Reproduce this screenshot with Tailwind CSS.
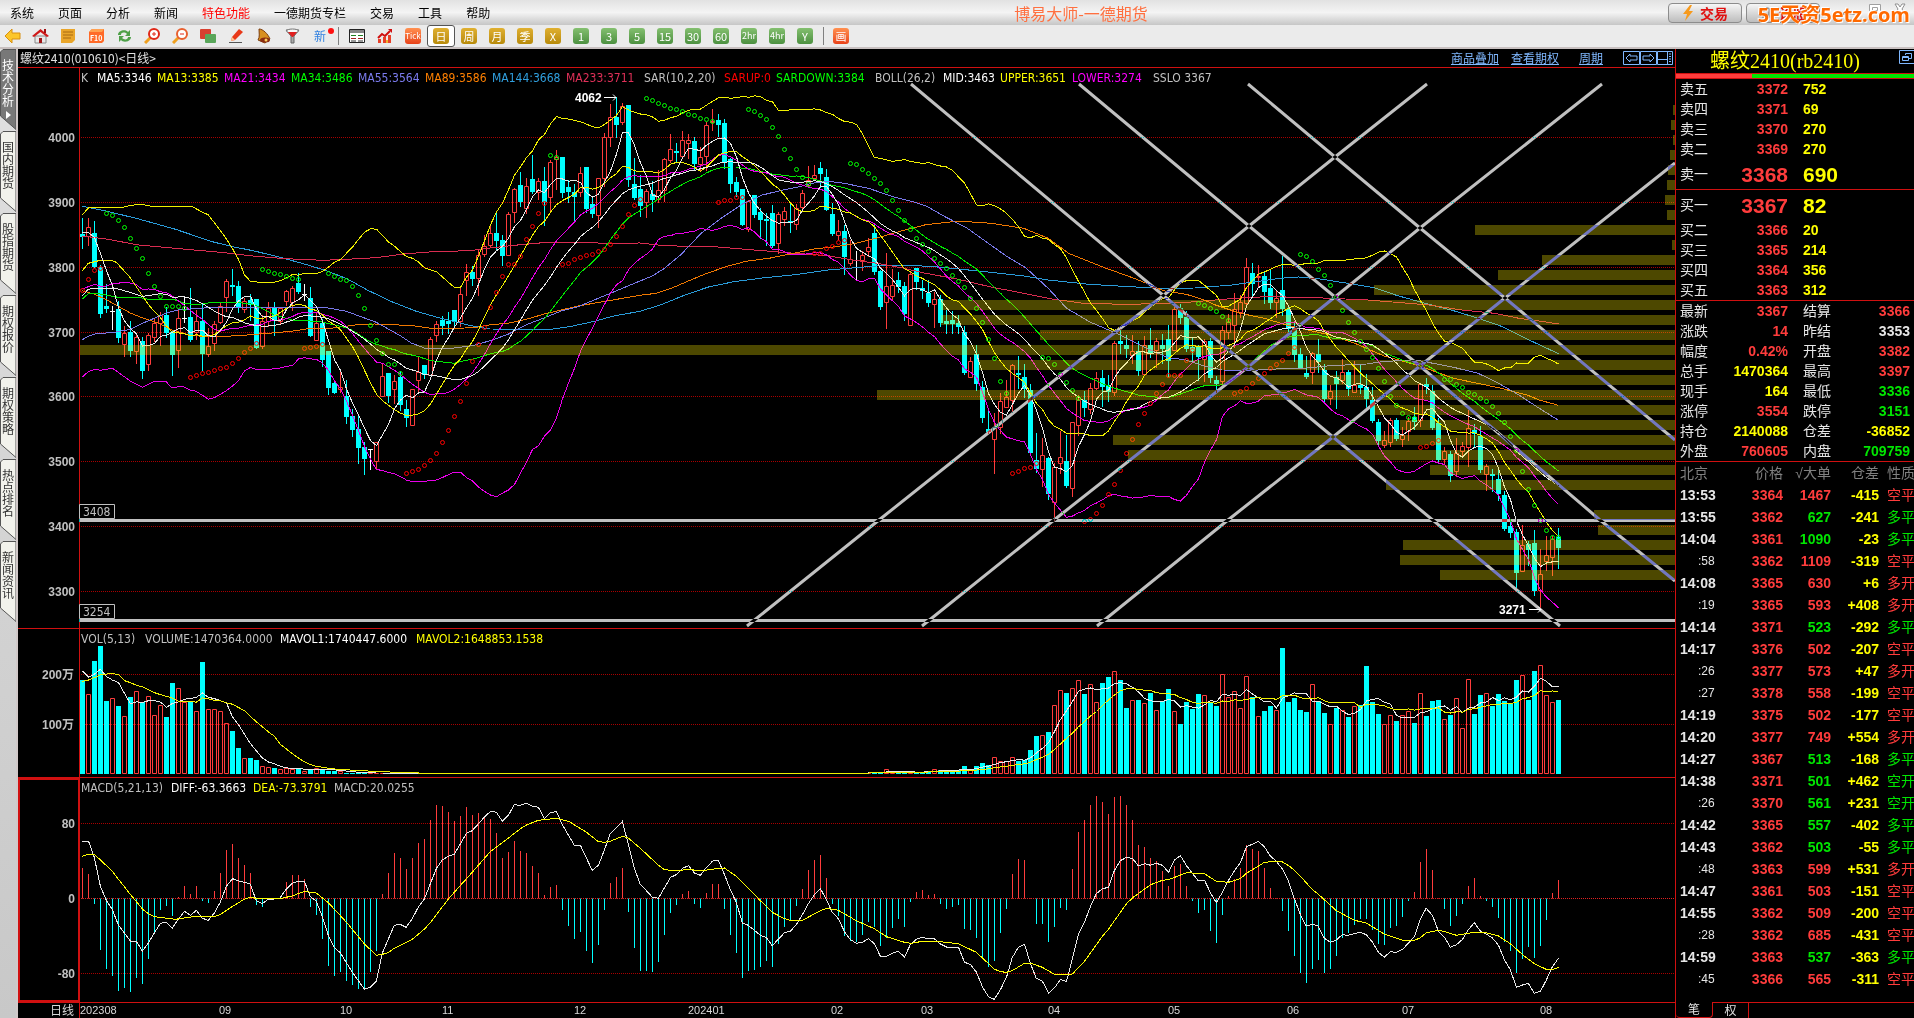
<!DOCTYPE html>
<html lang="zh-CN">
<head>
<meta charset="utf-8">
<title>博易大师-一德期货</title>
<script src="https://cdn.jsdelivr.net/npm/@tailwindcss/browser@4"></script>
</head>
<body class="h-screen overflow-hidden bg-black flex flex-col text-xs font-['Noto_Sans_CJK_SC',sans-serif] text-[#c0c0c0]">

<header class="relative h-[25px] shrink-0 flex items-center bg-linear-to-b from-[#e2e2e2] via-[#f4f4f4] to-[#c6c6c6] text-black">
  <nav class="flex gap-6 pl-[10px] leading-none">
    <a href="#">系统</a><a href="#">页面</a><a href="#">分析</a><a href="#">新闻</a><a href="#" class="text-[#ff0000]">特色功能</a><a href="#">一德期货专栏</a><a href="#">交易</a><a href="#">工具</a><a href="#">帮助</a>
  </nav>
  <h1 class="flex-1 pl-1 text-center text-base leading-none text-[#ff7040]">博易大师-一德期货</h1>
  <div class="flex items-center gap-1">
    <button class="w-[74px] h-5 rounded border border-[#8c8c8c] bg-linear-to-b from-[#f6f6f6] to-[#bdbdbd] flex items-center justify-center gap-[6px] text-sm font-bold leading-none text-[#e01010]">
      <svg width="12" height="16" viewBox="0 0 12 16"><path d="M8 0L1 9h4l-2 7 8-10H7l3-6z" fill="#f79a1c"/></svg>交易</button>
    <button class="w-[74px] h-5 rounded border border-[#8c8c8c] bg-linear-to-b from-[#f6f6f6] to-[#bdbdbd] flex items-center justify-center gap-[6px] text-sm font-bold leading-none text-[#e01010]">
      <svg width="14" height="14" viewBox="0 0 14 14"><circle cx="7" cy="7" r="6" fill="#9a9a9a"/><circle cx="7" cy="7" r="2" fill="#ddd"/></svg>诊股</button>
    <div class="flex w-[90px] h-5 justify-between pl-[18px] pr-2 items-start">
      <svg width="14" height="14" viewBox="0 0 14 14"><rect x="1.500" y="8.500" width="11" height="3" fill="#fff" stroke="#a0a0a0"/></svg>
      <svg width="14" height="12" viewBox="0 0 14 12"><path d="M1.500 1.500h11v9h-11zM4.500 4.500h5v3h-5z" fill="#fff" stroke="#a0a0a0"/></svg>
      <svg width="12" height="12" viewBox="0 0 12 12"><path d="M1 1h3l2 3 2-3h3L8 6l3 5H8L6 8l-2 3H1l3-5z" fill="#fff" stroke="#909090"/></svg>
    </div>
  </div>
  <div class="absolute right-1 top-[3px] text-xl leading-6 font-bold whitespace-nowrap text-[#ff6a00] font-['Open_Sans','Noto_Sans_CJK_SC',sans-serif] [text-shadow:1px_1px_0_#fff,-1px_-1px_0_#fff]">5E天资5etz.com</div>
</header>

<div id="tools" class="h-6 shrink-0 flex bg-[#ebebeb] border-b-2 border-[#c8c0c0] overflow-hidden pr-2 *:shrink-0 -ml-[2px]" role="toolbar">
  <button class="w-7 grid place-items-center" aria-label="后退"><svg width="17" height="16" viewBox="0 0 17 16"><path d="M8 1v4h8v6H8v4L1 8z" fill="#fcc62a" stroke="#d89010"/></svg></button>
  <button class="w-7 grid place-items-center" aria-label="首页"><svg width="17" height="16" viewBox="0 0 17 16"><path d="M3 8h11v7H3z" fill="#e8e8e8" stroke="#888"/><path d="M8.500 1L0 8l2 1 6.500-5L15 9l2-1z" fill="#d01818"/><path d="M12 1h2v4h-2z" fill="#a01010"/><path d="M7 10h3v5H7z" fill="#a01818"/></svg></button>
  <button class="w-7 grid place-items-center" aria-label="公告"><svg width="16" height="16" viewBox="0 0 16 16"><path d="M1 1h14v11l-3 3H1z" fill="#e9a52a"/><path d="M3 4h10M3 7h10M3 10h8" stroke="#a86a10"/></svg></button>
  <button class="w-7 grid place-items-center" aria-label="F10"><svg width="17" height="16" viewBox="0 0 17 16"><path d="M1 4l3-3h12v12l-2 2H1z" fill="#ff6a28"/><path d="M1 4l3-3h12l-2 3z" fill="#ffa050"/><text x="2" y="13" font-size="7" font-weight="bold" fill="#fff">F10</text></svg></button>
  <button class="w-7 grid place-items-center" aria-label="刷新"><svg width="15" height="16" viewBox="0 0 15 16"><path d="M1 7c0-5 8-6 10-3l2-2v6H8l2-2C8 4 4 4 4 7zM14 9c0 5-8 6-10 3l-2 2V8h5l-2 2c2 2 6 2 6-1z" fill="#4fa048"/></svg></button>
  <button class="w-7 grid place-items-center" aria-label="放大"><svg width="16" height="16" viewBox="0 0 16 16"><path d="M1 15l6-6" stroke="#f0a020" stroke-width="3"/><circle cx="10" cy="6" r="5" fill="#fff" stroke="#e02818" stroke-width="2"/><path d="M8 6h4M10 4v4" stroke="#e02818"/></svg></button>
  <button class="w-7 grid place-items-center" aria-label="缩小"><svg width="16" height="16" viewBox="0 0 16 16"><path d="M1 15l6-6" stroke="#f0a020" stroke-width="3"/><circle cx="10" cy="6" r="5" fill="#fff" stroke="#e86030" stroke-width="2"/><path d="M8 6h4" stroke="#e02818"/></svg></button>
  <button class="w-7 grid place-items-center" aria-label="叠加"><svg width="16" height="16" viewBox="0 0 16 16"><rect y="1" width="11" height="10" rx="1" fill="#d84030"/><rect x="5" y="6" width="11" height="9" rx="1" fill="#5aa65a"/></svg></button>
  <button class="w-7 grid place-items-center" aria-label="画线"><svg width="16" height="16" viewBox="0 0 16 16"><path d="M1 14.500h13" stroke="#555"/><path d="M11 1l4 3-8 8-4 1 1-4z" fill="#e83818"/><path d="M4 9l3 3-4 1z" fill="#ffc890"/></svg></button>
  <button class="w-7 grid place-items-center" aria-label="预警"><svg width="16" height="16" viewBox="0 0 16 16"><path d="M3 1c4 0 9 5 11 10l-5 4-7-3C4 9 3 5 3 1z" fill="#d89020" stroke="#7a3c10"/><ellipse cx="9" cy="12" rx="5" ry="2.500" fill="#8a2c10"/><circle cx="10" cy="12" r="1.500" fill="#ffd060"/></svg></button>
  <button class="w-7 grid place-items-center" aria-label="筛选"><svg width="15" height="16" viewBox="0 0 15 16"><path d="M1 2l5 6v7h3V8l5-6z" fill="#aaa" stroke="#666"/><ellipse cx="7.500" cy="3" rx="6" ry="2" fill="#f8f8f8" stroke="#777"/><path d="M3 4h9L8 9H7z" fill="#e02020"/></svg></button>
  <button class="relative w-7 grid place-items-center text-[#3080e0] leading-none">新<span class="absolute right-0 top-[3px] size-[6px] rounded-full bg-[#ff1010]"></span></button>
  <span class="w-[9px] flex justify-center py-[2px]"><i class="w-px bg-[#808080]"></i></span>
  <button class="w-7 grid place-items-center" aria-label="报价"><svg width="16" height="16" viewBox="0 0 16 16"><path d="M.5 1.500h15v13H.5z" fill="#fff" stroke="#222"/><path d="M1 2h14v3H1z" fill="#888"/><path d="M2 7.500h5M9 7.500h5" stroke="#208020"/><path d="M2 10.500h5M9 10.500h5" stroke="#a02020"/><path d="M2 13h5M9 13h5" stroke="#333"/></svg></button>
  <button class="w-7 grid place-items-center" aria-label="走势"><svg width="16" height="16" viewBox="0 0 16 16"><path d="M1 15v-4h3v4zM6 15V9h3v6zM11 15V7h3v8z" fill="#e84028"/><path d="M1 10l4-4 3 2 5-5" stroke="#d01010" stroke-width="2" fill="none"/><path d="M11 1h4v4z" fill="#d01010"/><path d="M9 15v-3h2v3z" fill="#f0b030"/></svg></button>
</div>

<div class="flex-1 min-h-0 flex">
  <nav id="tabs" class="w-[18px] shrink-0 border-r-2 border-[#d0c8c8] bg-linear-to-b from-[#e0e0e0] to-[#c8c8c8] flex flex-col"></nav>

  <main class="flex-1 min-w-0 flex flex-col">
    <div class="h-[19px] shrink-0 flex items-center justify-between border-b border-[#d01010] leading-none pl-[2px]">
      <h2 class="text-[#e0e0e0]">螺纹2410(010610)&lt;日线&gt;</h2>
      <div class="flex items-center text-[#80b8ff] pr-px">
        <a href="#" class="underline mr-3">商品叠加</a><a href="#" class="underline mr-5">查看期权</a><a href="#" class="underline mr-5">周期</a>
        <svg width="51" height="14" viewBox="0 0 51 14" fill="none" stroke="#80b8ff"><path d="M.5.5h16v13H.5zM17.500.5h16v13h-16zM34.500.5h15v13h-15z"/><path d="M3 7l4-4v2h7v4H7v2zM31 7l-4-4v2h-7v4h7v2zM34.500 8.500h10M44.500.5v13M46 3h2M46 5.500h2M46 8h2M46 10.500h2"/></svg>
      </div>
    </div>
    <section class="relative flex-[560] min-h-0 border-b border-[#d01010]">
      <svg id="price" class="absolute inset-0 size-full" viewBox="18 68 1657 560" preserveAspectRatio="none"></svg>
      <div class="absolute left-[63px] top-[2px] flex font-['DejaVu_Sans_Condensed','Noto_Sans',sans-serif] leading-4 whitespace-nowrap">
        <span class="w-4">K</span><span class="w-[60px] text-white">MA5:3346</span><span class="w-[67px] text-[#ffff00]">MA13:3385</span><span class="w-[67px] text-[#ff00ff]">MA21:3434</span><span class="w-[67px] text-[#00ff00]">MA34:3486</span><span class="w-[67px] text-[#7c7cf0]">MA55:3564</span><span class="w-[67px] text-[#ff8000]">MA89:3586</span><span class="w-[74px] text-[#30a0e0]">MA144:3668</span><span class="w-[78px] text-[#e03058]">MA233:3711</span><span class="w-20">SAR(10,2,20)</span><span class="w-[52px] text-[#ff0000]">SARUP:0</span><span class="w-[99px] text-[#00ff00]">SARDOWN:3384</span><span class="w-[68px]">BOLL(26,2)</span><span class="w-[57px] text-white">MID:3463</span><span class="w-[72px] text-[#ffff00]">UPPER:3651</span><span class="w-[81px] text-[#ff00ff]">LOWER:3274</span><span>SSLO 3367</span>
      </div>
    </section>
    <section class="relative flex-[148] min-h-0 border-b border-[#d01010]">
      <svg id="vol" class="absolute inset-0 size-full" viewBox="18 629 1657 148" preserveAspectRatio="none"></svg>
      <div class="absolute left-[63px] top-[2px] flex font-['DejaVu_Sans_Condensed','Noto_Sans',sans-serif] leading-4 whitespace-nowrap">
        <span class="w-16">VOL(5,13)</span><span class="w-[135px]">VOLUME:1470364.0000</span><span class="w-[136px] text-white">MAVOL1:1740447.6000</span><span class="text-[#ffff00]">MAVOL2:1648853.1538</span>
      </div>
    </section>
    <section class="relative flex-[224] min-h-0 border-b border-[#d01010]">
      <svg id="macd" class="absolute inset-0 size-full" viewBox="18 778 1657 224" preserveAspectRatio="none"></svg>
      <div class="absolute left-[63px] top-[2px] flex font-['DejaVu_Sans_Condensed','Noto_Sans',sans-serif] leading-4 whitespace-nowrap">
        <span class="w-[90px]">MACD(5,21,13)</span><span class="w-[82px] text-white">DIFF:-63.3663</span><span class="w-[81px] text-[#ffff00]">DEA:-73.3791</span><span>MACD:20.0255</span>
      </div>
    </section>
    <div class="relative h-[15px] shrink-0">
      <svg id="axis" class="absolute inset-0 size-full" viewBox="18 1003 1657 15" preserveAspectRatio="none"></svg>
    </div>
  </main>

  <aside class="w-[239px] shrink-0 border-l border-[#d01010] overflow-hidden flex flex-col font-['Liberation_Sans','Noto_Sans_CJK_SC',sans-serif]">
    <div class="relative h-6 flex items-center pl-[34px] text-[#ffff00] text-xl leading-none whitespace-nowrap font-['Liberation_Serif','Noto_Sans_CJK_SC',serif]">螺纹2410(rb2410)
      <svg class="absolute right-0 top-px" width="15" height="14" viewBox="0 0 15 14" fill="none" stroke="#80b8ff"><path d="M15 .5H.5v13H15M6.500 5V3.500h6v5h-3M3.500 6.500h6v4h-6zM3.500 7.500h6"/></svg>
    </div>
    <div class="h-[6px] border-y border-[#d01010] flex"><i class="w-[32%] bg-[#ff3c3c]"></i><i class="flex-1 bg-[#00e600]"></i></div>
    <table id="asks" class="w-full table-fixed text-sm leading-none font-bold"></table>
    <table id="bids" class="w-full table-fixed text-sm leading-none font-bold"></table>
    <table id="stats" class="w-full table-fixed text-sm leading-none font-bold"></table>
    <table id="ticks" class="w-full table-fixed text-sm leading-none font-bold"></table>
    <div class="mt-auto h-4 flex text-xs leading-none text-[#e0e0e0]">
      <button class="w-[37px] rounded-b-sm border-b border-r border-[#d01010]">笔</button>
      <button class="w-9 border-t border-r border-[#d01010]">权</button>
      <span class="flex-1 border-t border-[#d01010]"></span>
    </div>
  </aside>
</div>

<script>
const $ = id => document.getElementById(id);

/* toolbar period buttons */
const gold = 'from-[#e0b030] to-[#b88a08]', green = 'from-[#84c070] to-[#4c9040]', red = 'from-[#ff9050] to-[#e84018]';
const period = (t, c) => `<button class="w-7 grid place-items-center"><span class="w-4 h-4 rounded-[3px] bg-linear-to-b ${c} text-white text-[11px] leading-4 text-center overflow-hidden whitespace-nowrap font-['Liberation_Sans_Narrow','Noto_Sans_CJK_SC',sans-serif]">${t}</span></button>`;
const small = (t, c) => period(`<span class="text-[9px] leading-4 block">${t}</span>`, c);
$('tools').insertAdjacentHTML('beforeend',
  period('<span class="text-[8px] leading-4 block">Tick</span>', red) +
  period('日', gold).replace('w-7 grid', 'w-7 rounded-[3px] border border-[#555] bg-white grid') +
  ['周', '月', '季', 'X'].map(t => period(t, gold)).join('') +
  ['1', '3', '5', '15', '30', '60'].map(t => period(t, green)).join('') +
  small('2hr', green) + small('4hr', green) + period('Y', green) +
  '<span class="w-2 flex justify-center py-[2px]"><i class="w-px bg-[#808080]"></i></span>' + period('画', red));

/* side tabs */
$('tabs').innerHTML = ['技术分析', '国内期货', '股指期货', '期权报价', '期权策略', '热点排名', '新闻资讯'].map((t, i) =>
  `<button class="relative w-4 h-[82px] shrink-0 pt-[10px] flex flex-col items-center text-xs ${i ? 'text-[#333]' : 'text-white'}">
   <svg class="absolute inset-0 size-full" viewBox="0 0 16 82"><path d="M.5 67V3L3 .5H16V80.500z" fill="${i ? '#f2f2ec' : '#787878'}" stroke="#555"/></svg>
   <span class="relative w-3 break-all leading-[12px]">${t}</span>${i ? '' : '<svg class="relative mt-1" width="5" height="8" viewBox="0 0 5 8"><path d="M0 0l5 4-5 4z" fill="#fff"/></svg>'}</button>`).join('');

/* quote tables */
const R = 'text-[#ff3c3c]', G = 'text-[#00e600]', Y = 'text-[#ffff00]', W = 'text-[#e6e6e6]';
const book = rows => '<colgroup><col class="w-[45px]"><col class="w-[67px]"><col></colgroup>' + rows.map(([l, p, v]) => {
  const big = l.endsWith('一');
  return `<tr class="${big ? 'h-[30px] text-[21px]' : 'h-5'}"><th scope="row" class="pl-1 text-left text-sm leading-none font-normal ${W}">${l}</th><td class="text-right ${R}">${p}</td><td class="pl-[15px] ${Y}">${v}</td></tr>`;
}).join('');
$('asks').innerHTML = book([['卖五', 3372, 752], ['卖四', 3371, 69], ['卖三', 3370, 270], ['卖二', 3369, 270], ['卖一', 3368, 690]]);
$('bids').innerHTML = book([['买一', 3367, 82], ['买二', 3366, 20], ['买三', 3365, 214], ['买四', 3364, 356], ['买五', 3363, 312]]);
$('stats').innerHTML = '<colgroup><col class="w-[45px]"><col class="w-[67px]"><col class="w-[60px]"><col></colgroup>' + [
  ['最新', 3367, R, '结算', 3366, R], ['涨跌', 14, R, '昨结', 3353, W], ['幅度', '0.42%', R, '开盘', 3382, R], ['总手', 1470364, Y, '最高', 3397, R],
  ['现手', 164, Y, '最低', 3336, G], ['涨停', 3554, R, '跌停', 3151, G], ['持仓', 2140088, Y, '仓差', -36852, Y], ['外盘', 760605, R, '内盘', 709759, G]
].map(r => `<tr class="h-5"><th scope="row" class="pl-1 text-left font-normal ${W}">${r[0]}</th><td class="text-right ${r[2]}">${r[1]}</td><th scope="row" class="pl-[15px] text-left font-normal ${W}">${r[3]}</th><td class="pr-1 text-right ${r[5]}">${r[4]}</td></tr>`).join('');
['bids', 'stats', 'ticks'].forEach(id => $(id).insertAdjacentHTML('beforebegin', '<hr class="h-px shrink-0 border-0 bg-[#d01010]">'));
$('ticks').innerHTML = '<colgroup><col class="w-[45px]"><col class="w-[62px]"><col class="w-12"><col class="w-12"><col></colgroup>' +
  '<tr class="h-[22px] text-[#808080] whitespace-nowrap *:font-normal *:text-right"><th class="pl-1 text-left!">北京</th><th>价格</th><th>√大单</th><th>仓差</th><th class="pl-2 text-left!">性质</th></tr>' +
  `13:53 3364 1467 -415 空平 r|13:55 3362 627 -241 多平 g|14:04 3361 1090 -23 多平 g|:58 3362 1109 -319 空平 r|14:08 3365 630 +6 多开 r|:19 3365 593 +408 多开 r|14:14 3371 523 -292 多平 g|14:17 3376 502 -207 空平 r|:26 3377 573 +47 多开 r|:27 3378 558 -199 空平 r|14:19 3375 502 -177 空平 r|14:20 3377 749 +554 多开 r|14:27 3367 513 -168 多平 g|14:38 3371 501 +462 空开 g|:26 3370 561 +231 空开 g|14:42 3365 557 -402 多平 g|14:43 3362 503 -55 多平 g|:48 3363 599 +531 多开 r|14:47 3361 503 -151 空平 r|14:55 3362 509 -200 空平 r|:28 3362 685 -431 空平 r|14:59 3363 537 -363 多平 g|:45 3366 565 -311 空平 r`
  .split('|').map(s => { const [t, p, v, d, k, c] = s.split(' '), col = c === 'r' ? R : G, sec = t[0] === ':';
    return `<tr class="h-[22px] whitespace-nowrap"><td class="${sec ? 'pl-[22px] font-normal text-xs leading-none' : 'pl-1'} ${W}">${t}</td><td class="text-right ${R}">${p}</td><td class="text-right ${col}">${v}</td><td class="text-right ${Y}">${d}</td><td class="pl-2 font-normal ${col}">${k}</td></tr>`; }).join('');

/* daily bars: kind (r up, c down, w flat), high, body top, body bottom, low, in thirds of a unit */
const candles = [];
const add = (off, s) => s.trim().split(/\s*,\s*/).forEach(t => { const a = t.split(' '); candles.push([a[0], ...a.slice(1).map(v => Math.round((+v + off) / 3))]); });
add(0, 'c 655 702 710 743,r 655 682 709 738,c 664 699 801 801');
add(750, `c 45 52 191 201,c 102 168 177 186,w 168 184 184 237,c 153 177 263 276,r 228 248 281 321,c 213 247 302 318,r 250 262 304 342,c 262 273 362 384,r 250 256 343 362,r 208 220 262 275,r 186 196 220 288,c 170 195 248 260,c 240 246 315 375,r 180 203 301 354,w 138 203 203 216,c 114 201 270 273,r 180 214 246 270,c 160 213 312 360,r 235 289 311 322,r 214 221 280 303,r 158 168 215 222,r 88 94 142 186,c 57 105 110 135,c 93 108 171 186,r 144 154 178 189,c 132 150 165 210,c 147 147 293 294,r 195 214 288 297,r 156 174 214 230,c 156 173 209 255,r 172 174 213 222,r 120 124 154 168,r 108 115 157 183,c 70 99 126 130,w 102 132 132 150,c 111 144 258 258,r 187 219 271 272,c 207 219 330 348,c 303 303 414 432,c 396 399 429 429,r 357 412 416 430,c 390 438 500 519,c 477 498 540 558,c 492 537 594 639,c 577 591 627 672,w 596 596 596 657,r 577 577 634 657,r 340 379 439 440,c 369 369 438 456,r 376 394 418 462,c 363 381 465 480,c 450 477 504 528,r 418 418 526 526,r 321 367 391 425,c 345 345 374 384,r 262 268 374 376,r 213 223 256 276,c 198 210 227 252,c 186 213 221 249,c 180 180 215 234,r 112 133 214 230,r 42 67 91 138,c 48 66 87 105,r 0 16 85 138`);
add(0, `r 705 739 761 772,r 672 700 735 745,c 633 699 722 747,c 706 720 767 795,r 636 643 766 768,r 564 568 637 669,c 516 555 605 618,r 534 557 625 641,c 465 537 575 579,r 535 542 576 600,c 501 543 607 675,r 480 485 592 636,r 450 470 478 570,c 471 471 578 591,c 540 560 576 605,c 552 575 591 663,r 501 520 575 591,c 501 501 627 636,c 591 611 642 650,r 534 535 646 684,r 400 412 535 560,r 312 352 412 440,c 291 351 375 410,r 310 317 367 375,c 315 315 539 558,c 475 551 593 597,c 525 568 618 648,r 567 574 607 654,c 543 582 600 633,r 510 569 597 609,r 473 478 569 606,r 402 446 479 488,c 429 453 459 487,r 393 419 469 472,r 403 421 430 477,c 410 424 491 509,r 440 470 491 513,r 366 376 469 513,r 327 362 366 392,c 342 360 374 407,c 357 369 486 504,c 475 477 551 575,c 532 545 575 588,c 566 566 675 676,r 600 602 688 695,c 586 586 646 652,c 625 636 660 714,c 640 656 662 735,c 615 640 738 741,r 636 643 728 762,r 621 634 658 678,c 606 662 668 695,r 613 625 673 690,r 570 580 620 627,r 498 541 556 560,r 495 525 533 542,c 486 504 521 560,c 507 531 629 630,c 610 642 702 705,r 660 694 706 720,c 675 692 770 822,r 720 776 788 798,w 753 780 780 840,r 753 766 780 812,r 715 742 754 770,c 675 699 816 822,c 810 813 920 927,r 759 859 907 987,r 807 856 887 900,c 816 840 861 875,c 846 858 941 960,r 816 821 976 978,c 804 804 846 867,c 840 865 872 894,c 840 879 908 918,r 876 898 913 984,c 885 897 970 978,c 930 962 972 998`);
add(720, `c 213 240 251 278,c 225 249 261 279,c 258 276 399 402,r 350 364 412 414,c 315 342 432 450,c 423 441 534 546,c 513 567 575 580,r 520 562 596 702,r 460 484 562 582,r 420 470 502 502,r 372 376 479 520,c 348 399 404 445,c 372 411 447 470,c 432 450 638 640,c 579 660 686 696,r 594 646 688 740`);
add(1020, `c 350 354 461 477,r 368 380 485 545,r 272 352 368 402,c 285 363 438 441,r 245 247 443 471,r 165 181 254 288,c 153 180 204 228,r 130 145 208 222,r 96 115 143 150,c 90 113 140 198,c 104 135 155 183`);
add(720, `r 304 310 457 468,c 267 303 312 338,c 285 315 327 352,r 285 334 346 372,c 303 333 393 405,r 288 314 401 404,c 264 314 343 352,r 294 304 331 384,c 282 316 328 370,c 255 297 362 408,r 202 208 331 334,c 192 205 234 249,c 213 231 327 333,c 290 320 334 363,c 315 322 350 420,r 298 304 358 426,c 294 303 414 426,c 408 420 432 456,r 258 271 424 436,r 222 245 277 296,r 159 208 256 324,r 164 187 217 234,r 54 82 188 200,c 69 99 131 171,r 75 107 110 140,c 96 107 156 189,c 87 144 190 204,r 150 173 187 234,c 45 150 207 225,c 200 206 267 276,c 250 262 345 363,c 324 342 384 384,c 348 399 411 414,r 336 340 397 432,c 297 342 366 396,c 372 390 477 486,r 436 454 475 496,c 393 411 432 504,r 357 397 421 432,c 390 396 447 465,r 362 436 455 456,c 372 434 443 459,c 402 440 477 500,c 441 480 543 545,c 537 546 603 615,r 573 601 616 624,r 534 540 605 621,c 534 540 597 600,r 560 584 596 621,r 532 543 572 603,c 501 530 545 567,r 430 432 539 560,c 414 432 440 459,c 435 453 564 567,c 534 549 660 663`);
add(1020, `r 320 334 356 375,c 333 342 407 423,r 295 339 392 410,r 305 318 332 355,r 210 265 320 380,c 252 270 281 317,c 258 288 389 395,r 372 378 401 453,c 387 402 407 453,c 390 416 462 480,c 453 465 567 570,c 545 558 579 590,c 566 575 698 740,r 555 616 692 696,c 604 613 631 675,c 570 610 753 765,r 627 703 750 805,r 588 646 664 693,r 588 598 650 708,c 564 590 624 685`);

const X = i => 82 + 6 * i;
const RED = '#ff3c3c', CYAN = '#00ffff', WHITE = '#e8e8e8', YEL = '#ffff00', GRN = '#00ff00';
const line = (pts, c) => `<polyline points="${pts.map(p => p[0].toFixed(1) + ',' + p[1].toFixed(1)).join(' ')}" fill="none" stroke="${c}" shape-rendering="crispEdges"/>`;
const conv = (ox, oy, kx) => s => s.trim().split(/\s+/).map(t => { const [a, b] = t.split(':'); return [ox + a / kx, oy + b / 3]; });
const K = 2.45;
const a0 = conv(0, 0, K), a1 = conv(640, 0, K), a2 = conv(1274, 0, K), b2 = conv(1274, 340, K);
const c0 = conv(0, 678, K), c1 = conv(640, 678, K), c2 = conv(1274, 678, K);
const z1 = conv(78, 250, 3), z2 = conv(950, 240, 3);

const grid = (ys, c) => ys.map(y => `<path d="M81 ${y}.500H1675" stroke="${c || '#a80000'}" stroke-dasharray="1 1" shape-rendering="crispEdges"/>`).join('');
const label = (x, y, t, anchor) => `<text x="${x}" y="${y}" text-anchor="${anchor || 'end'}">${t}</text>`;
const labels = s => `<g fill="#c0c0c0" font-size="12" font-weight="700" font-family="Liberation Sans, Noto Sans CJK SC, sans-serif">${s}</g>`;
const axisLine = (y, h) => `<rect x="79" y="${y}" width="1" height="${h}" fill="#d01010"/>`;

/* moving averages over closes */
const close = candles.map(c => c[0] === 'c' ? c[3] : c[2]);
const avg = (v, i, n) => { let s = 0; for (let k = i - n + 1; k <= i; k++) s += v[k]; return s / n; };
const ma = (v, n, lead) => [...lead, ...v.map((_, i) => i >= n - 1 ? [X(i) + .5, avg(v, i, n)] : 0).filter(Boolean)];
const boll = (k, lead) => [...lead, ...close.map((_, i) => { if (i < 25) return 0; const m = avg(close, i, 26); let s = 0; for (let j = i - 25; j <= i; j++) s += (close[j] - m) ** 2; return [X(i) + .5, m + k * Math.sqrt(s / 25)]; }).filter(Boolean)];

let s = grid([137, 202, 267, 332, 396, 461, 526, 591]) + axisLine(68, 560);
s += labels([4000, 3900, 3800, 3700, 3600, 3500, 3400, 3300].map((p, k) => label(75, 142 + 65 * k - (k > 3 ? 1 : 0), p)).join(''));
candles.forEach(([k, h, t, b, l], i) => {
  const x = X(i);
  if (k === 'c') s += `<path d="M${x} ${h}h1V${l + 1}h-1z" fill="${CYAN}"/><rect x="${x - 2}" y="${t}" width="5" height="${Math.max(2, b - t)}" fill="${CYAN}"/>`;
  else if (k === 'r') s += `<path d="M${x + .5} ${h}V${t}M${x + .5} ${b}V${l}M${x - 1.5} ${t + .5}h4V${Math.max(b, t + 1) + .5}h-4z" fill="none" stroke="${RED}"/>`;
  else s += `<path d="M${x} ${h}h1V${l + 1}h-1z M${x - 2} ${t}h5v1h-5z" fill="#fff"/>`;
});
s += line([...a0('202:619 260:633 340:657 430:688 520:725 570:740 620:752 680:770 740:790 800:812 850:836 900:870 960:905 1020:934 1080:955 1150:976 1200:987 1350:988 1400:979 1460:963 1500:949 1568:934'), ...a1('50:915 110:885 170:860 230:845 300:834 380:824 460:810 540:802 600:796 680:797 740:802 860:817 940:828 1000:840 1100:853 1200:860 1280:865 1360:864 1450:855 1568:835'), ...a2('60:831 120:838 190:852 245:863 300:886 370:910 440:932 500:955 560:980 625:1020 697:1061')], '#2a9bd8');
s += line([...a0('202:708 260:717 340:735 440:746 540:757 620:768 700:776 790:781 850:778 920:773 990:762 1060:755 1150:752 1200:744 1260:736 1330:728 1430:727 1480:730 1568:729'), ...a1('60:737 190:741 280:750 370:759 460:767 520:780 580:790 640:803 700:820 780:838 860:861 940:880 1010:897 1080:909 1180:913 1280:911 1350:906 1460:895 1553:889'), ...a2('0:890 120:894 230:900 380:915 460:930 540:940 600:955 650:963 697:972')], '#d82c50');
s += line([...z1('13:122 50:133 85:149 121:169 157:189 200:206 240:219 283:240 337:256 373:259 409:260 480:257 571:250 640:244 690:236 760:235 830:225 890:222 950:224 1010:228 1060:235 1111:237 1160:234 1200:231 1237:224 1290:220 1345:208 1399:192 1450:180 1500:168'), ...a1('0:886 40:880 80:863 120:842 160:822 210:800 260:784 320:774 380:759 430:746 480:740 530:730 580:714 640:693 700:674 760:666 790:664 860:670 940:685 1000:715 1050:760 1140:804 1200:830'), ...z2('590:130 640:152 709:163 763:180 799:196 871:220 943:235 1003:253 1069:269 1141:285 1213:309 1300:347'), ...b2('357:78 440:115 550:143 620:165 650:180 697:196')], '#f07800');
s += line([...z1('13:269 31:259 50:252 67:250 103:248 139:241 157:239 175:229 211:212 229:205 265:189 301:180 391:173 745:173 805:184 895:217 967:257 1000:279 1039:294 1093:297 1129:294 1183:287 1237:272 1290:253 1345:224 1400:203 1450:183 1500:170'), ...a0('1450:905 1500:880 1568:843').slice(2), ...a1('30:828 60:805 100:764 150:700 200:654 251:612 300:585 350:570 390:560 420:550 460:544 500:550 560:565 620:590 665:604 700:617 750:652 800:683 850:727 900:770 945:803 1000:865'), ...z2('350:205 420:246 511:285 583:322 655:353 709:360 763:378 817:390 907:391 979:387 1069:384 1141:377 1250:372 1303:364 1357:362'), ...b2('357:62 440:82 500:100 550:130 600:165 650:205 697:241')], '#7878e8');
s += line(ma(close, 34, z1('13:147 31:131 50:130 85:135 120:142 180:142 211:148 240:149 290:149 319:160 355:164 390:159 460:156 500:160 517:161 535:167 571:185 589:195')), '#00e800');
s += line(ma(close, 21, z1('13:117 50:103 67:108 85:108 103:102 140:97 157:99 175:104 193:118 211:117 229:118 247:125 265:128 283:138 300:152 320:167 340:183 355:196')), '#e800e8');
s += line(ma(close, 13, z1('13:62 31:40 50:35 67:31 100:31 115:37 130:53 157:83 193:137 211:163')), '#f0f000');
s += line(ma(close, 5, a0('202:698 217:698 231:712 246:760')), WHITE);
s += line(boll(0, z1('13:137 31:118 50:115 120:117 160:128 193:139 211:137 247:131 265:133 283:142 319:140 355:151 380:165 409:183 427:193 445:200')), WHITE);
s += line(boll(-2, a0('202:644 217:623 302:622 320:616 348:613 370:619 470:619 495:636 510:644 530:676 555:717')), '#f0f000');
s += line(boll(2, z1('13:381 31:365 50:358 67:361 103:355 121:367 140:381 157:393 193:412 229:394 265:396 283:414 301:410 319:411 337:420 355:424 373:436 391:448 409:443 427:433 445:422')), '#e800e8');

/* parabolic SAR: start index, base, colour, values */
[[0, 0, 'r', '869 836 809 803'], [4, 0, 'g', '640 645 661 682 713 743 775 818 857 889 919 919 919 924'], [18, 0, 'r', '1132 1126 1120 1117 1111 1105 1101 1090 1075 1057 1043 1030'], [30, 0, 'g', '808 814 819 823 828 834 838'], [37, 0, 'r', '1045 1042 1039 1033'], [41, 0, 'g', '820 829 836 841 859 886 925 976 1021 1060 1093 1093 1120'], [54, 0, 'r', '1420 1414 1408 1396 1381 1360 1327 1291 1249 1204 1150 1084 1033 980 922 877 829 793 793 767 716 677 640 610'], [78, 0, 'g', '466 470'], [80, 0, 'r', '793 788 778 772 766 761 754 748 733 709 677 643 616 597'], [94, 0, 'g', '293 301 308 316 323 328 334 341 346 353 358 364'], [106, 0, 'r', '607 601 599 592 590'], [111, 0, 'g', '328 334 344 358 380 409 446 475 506 530 553'], [122, 0, 'r', '760 760 745 737 725 720'], [128, 0, 'g', '488 493 508 520 533 548 569 601 631 661 688 713 733 754 773 790 805 826 844 862 893 925 965 1018 1075 1144 1180'], [155, 0, 'r', '1420 1414 1405 1400 1389'], [160, 0, 'g', '1070 1075 1093 1121 1147 1171 1195'], [167, 1020, 'r', '544 536 520 494 461 433 389 338 296 253 220 190 158 131 106 104 104 61 31'], [186, 720, 'g', '190 196 205 214 229 241'], [192, 720, 'r', '458 452 445 430 415 400 385 373 361 340 322'], [203, 720, 'g', '43 49 64 86 106 136 171 211 247 277 304 328 352 385 424 467 496 520 532 535'], [223, 720, 'r', '622 619 610 601'], [227, 1020, 'g', '116 118 131 142 155 163 175 184 199 220 247 287 329 394 448 494 541 571 590 590']]
.forEach(([i0, off, c, v]) => v.split(' ').forEach((y, k) => { s += `<circle cx="${X(i0 + k) + .5}" cy="${Math.round((+y + off) / 3) + .5}" r="2" fill="none" stroke="${c === 'r' ? '#ff0000' : GRN}"/>`; }));

/* volume profile */
const profile = { 105: 1673, 120: 1671, 135: 1673, 150: 1670, 165: 1668, 180: 1667, 195: 1665, 210: 1667, 225: 1475, 240: 1672, 255: 1542, 270: 1498, 285: 1374, 300: 941, 315: 941, 330: 1040, 345: 80, 360: 979, 375: 1116, 390: 877, 405: 1374, 420: 1400, 435: 1113, 450: 1128, 465: 1430, 480: 1386, 510: 1594, 525: 1598, 540: 1403, 555: 1400, 570: 1440 };
for (const y in profile) s += `<rect x="${profile[y]}" y="${y}" width="${1675 - profile[y]}" height="10" fill="#fff000" fill-opacity=".3"/>`;

/* drawn trend lines */
const trend = (d, w) => `<path class="mix-blend-difference" d="${d}" fill="none" stroke="#c0c0c0" stroke-width="${w}"/>`;
s += trend('M79 520.500H1675', 3) + trend('M79 620.500H1675', 3);
['M911 84L1164 296L1333 437L1560 626', 'M1079 84L1249 226L1335 297L1420 366L1600 520L1675 581', 'M1248 84L1335 157L1420 228L1505 298L1675 440', 'M747 626L879 520L1105 340L1164 295L1249 226L1335 157L1427 84', 'M922 626L1054 520L1248 367L1335 297L1420 228L1602 84', 'M1097 626L1228 520L1333 437L1420 366L1505 298L1675 163'].forEach(d => s += trend(d, 3));
s += `<g fill="#000" stroke="#c0c0c0"><path d="M79.500 504.500h35v14h-35zM79.500 604.500h35v14h-35z"/></g><g fill="#c0c0c0" font-size="12" font-family="DejaVu Sans Condensed, Noto Sans, sans-serif"><text x="83" y="516">3408</text><text x="83" y="616">3254</text></g>`;
s += `<g fill="#fff" font-size="12" font-weight="700" font-family="Liberation Sans, sans-serif"><text x="575" y="102">4062</text><text x="1499" y="614">3271</text></g><path d="M604 97.500h12m-3-3l3 3l-3 3M1529 609.500h12m-3-3l3 3l-3 3" fill="none" stroke="#fff"/>`;
$('price').innerHTML = s;

/* volume */
const vt = ('6 49 -51 -96 69 61 84 115 57 40 73 55 112 82 117 15 31 73 70 100 -48 94 94 100 136 159 210 241 240 246 265 268 270 274 271 273 270 280 275 271 276 278 279 280 284 ' + '285 '.repeat(87) + '282 282 274 284 284 279 283 282 283 279 274 276 276 278 277 264 277 264 255 262 238 250 250 238 248 247 216 174 170 162 80 35 45 31 7 48 19 73 15 -3 -20 6 90 67 66 76 45 97 70 33 100 138 72 93 48 52 75 84 -11 58 40 91 -5 57 115 99 84 97 -90 72 60 96 102 19 70 105 139 90 97 117 85 82 -36 72 108 139 112 129 112 100 135 46 114 69 66 124 111 61 151 4 108 51 46 84 48 69 79 6 -8 66 -21 -38 52 73 66').split(' ').map(v => 678 + v / 3);
s = grid([674, 724]) + axisLine(629, 148) + labels(label(74, 679, '200万') + label(74, 729, '100万'));
vt.forEach((y, i) => {
  const t = Math.round(y), x = X(i);
  s += candles[i][0] === 'c' ? `<rect x="${x - 2}" y="${t}" width="5" height="${774 - t}" fill="${CYAN}"/>` : `<path d="M${x - 1.5} ${t + .5}h4V773.500h-4z" fill="none" stroke="${RED}"/>`;
});
s += line(ma(vt, 5, c0('202:-21 217:-2 231:-11 246:-26')), WHITE) + line(ma(vt, 13, c0('202:10 217:6 246:-9 275:-14 290:-10 305:8 320:14 334:22 349:26 363:35')), '#f0f000');
$('vol').innerHTML = s;

/* MACD */
const hist = '570 588 678 816 873 894 939 930 942 900 918 843 765 696 684 714 657 624 648 624 669 675 639 585 516 498 540 561 585 681 686 664 664 655 612 591 591 603 687 711 783 864 894 882 909 921 933 930 882 819 648 585 525 540 573 540 495 483 426 381 384 402 429 414 387 411 405 417 423 465 540 522 489 519 525 564 585 651 627 621 696 744 783 762 819 855 801 696 615 597 570 702 810 879 879 882 852 771 705 681 648 639 678 690 645 618 618 693 771 825 900 879 876 867 849 867 798 747 729 684 633 576 546 531 600 678 714 774 789 792 771 732 747 804 780 750 723 747 672 642 636 651 648 678 693 687 681 753 756 780 837 867 849 765 693 588 543 546 661 738 738 792 747 690 696 573 462 426 381 354 372 408 357 354 381 426 501 507 540 549 579 624 564 558 624 669 705 696 759 795 711 654 603 570 501 513 519 570 630 661 699 759 834 885 915 873 846 885 873 834 780 765 741 723 723 756 798 801 750 744 717 669 642 552 513 576 661 693 744 714 678 624 600 654 669 687 720 792 819 885 843 807 840 804 726 645 606'.split(' ');
s = grid([823, 973]) + grid([898], '#e02020') + axisLine(778, 224) + '<path d="M19 779h60v222H19z" fill="none" stroke="#d01010" stroke-width="2"/>';
s += labels(label(75, 828, '80') + label(75, 903, '0') + label(75, 978, '-80'));
hist.forEach((v, i) => { const y = Math.round(678 + v / 3); s += `<path d="M${X(i) + .5} 898.500V${y}" stroke="${y > 898 ? CYAN : RED}"/>`; });
s += line([...c0('202:490 217:490 231:538 246:625 261:668 275:694 290:741 320:790 334:790 349:819 363:796 378:765 393:736 407:733 422:751 437:723 452:700 467:712 481:697 496:721 510:727 525:705 540:672 555:624 570:602 585:609 598:613 613:618 628:668 643:677 657:664 685:662 700:635 716:616 731:610 746:611 760:655 775:670 790:716 805:775 819:808 834:825 863:882 893:934 907:928 922:910 937:825 966:742 980:739 995:748 1010:722 1025:687 1040:662 1055:615 1069:572 1084:545 1099:535 1113:529 1143:466 1157:458 1187:417 1202:400 1216:403 1231:430 1246:411 1260:380 1275:382 1290:376 1304:384 1319:388 1334:422 1348:405 1363:400 1378:440 1407:502 1422:502 1451:577 1466:562 1481:515 1495:467 1510:450 1525:430 1554:570'),
 ...c1('0:617 30:657 45:661 75:598 89:590 104:571 119:563 134:586 148:592 163:568 178:549 192:547 207:590 222:637 236:673 251:735 265:742 295:772 310:779 324:803 354:764 368:760 383:740 398:710 412:678 427:650 442:632 457:665 471:703 486:722 501:761 515:784 530:796 545:793 560:782 574:797 589:835 604:835 618:826 633:820 648:837 662:801 677:784 692:778 706:783 721:782 736:798 751:807 780:807 795:853 809:859 824:882 839:926 854:957 868:964 883:935 898:898 912:839 927:808 942:799 957:858 971:901 986:910 1001:945 1015:930 1030:905 1045:910 1059:845 1074:769 1089:732 1104:685 1118:647 1133:632 1148:628 1162:578 1177:548 1192:538 1207:542 1221:564 1236:557 1251:562 1265:556 1280:562 1295:583 1310:545 1324:533 1339:563 1368:609 1383:607 1398:645 1412:674 1427:643 1442:607 1456:579 1471:554 1486:506 1500:499 1515:490 1530:507 1545:535'),
 ...c2('6:550 21:574 35:608 50:662 65:710 79:744 94:739 108:744 123:780 138:793 153:786 167:770 182:772 211:763 226:770 241:792 256:823 270:838 285:821 300:823 315:814 344:776 359:722 373:691 388:712 403:760 418:778 432:808 447:800 462:784 476:755 491:734 506:760 520:768 535:780 550:802 565:847 579:875 594:928 609:921 623:916 638:946 653:940 667:907 682:866 697:841')], WHITE);
s += line([...c0('202:535 217:529 231:529 261:563 275:580 320:650 349:693 363:707 378:716 430:724 481:715 525:716 540:709 570:685 598:664 613:658 628:661 690:661 716:654 746:640 775:645 805:675 849:733 893:798 922:832 937:829 951:824 966:811 1010:784 1040:753 1055:733 1099:662 1157:583 1202:520 1231:494 1275:452 1290:441 1319:427 1363:421 1393:430 1437:463 1466:491 1481:493 1495:490 1525:475 1540:481'),
 ...c1('0:510 45:562 60:575 90:578 119:574 148:579 192:571 207:570 236:595 295:668 324:703 354:722 368:727 398:727 442:698 457:691 486:697 530:728 574:752 604:776 648:793 665:796 692:790 736:791 780:797 824:823 868:873 883:881 898:883 912:878 942:856 957:856 986:868 1015:889 1050:891 1060:887 1089:850 1133:775 1148:753 1192:677 1207:659 1251:620 1280:607 1295:605 1339:584 1383:587 1412:610 1442:613 1471:602 1486:586 1530:553'),
 ...c2('6:550 21:552 40:566 65:595 94:635 108:648 153:698 197:727 226:735 270:768 315:787 344:787 359:779 373:764 403:757 418:761 447:772 491:763 520:764 550:774 579:797 609:830 638:857 667:874 682:875 697:868')], YEL);
$('macd').innerHTML = s;

/* time axis */
$('axis').innerHTML = axisLine(1003, 15) + `<g fill="#d8d8d8" font-size="11" font-family="Liberation Sans, Noto Sans CJK SC, sans-serif"><text x="74" y="1015" text-anchor="end" font-size="12">日线</text>` +
  [[80, '202308'], [219, '09'], [340, '10'], [442, '11'], [574, '12'], [688, '202401'], [831, '02'], [921, '03'], [1048, '04'], [1168, '05'], [1287, '06'], [1402, '07'], [1540, '08']].map(([x, t]) => label(x, 1014, t, 'start')).join('') + '</g>';
</script>
</body>
</html>
